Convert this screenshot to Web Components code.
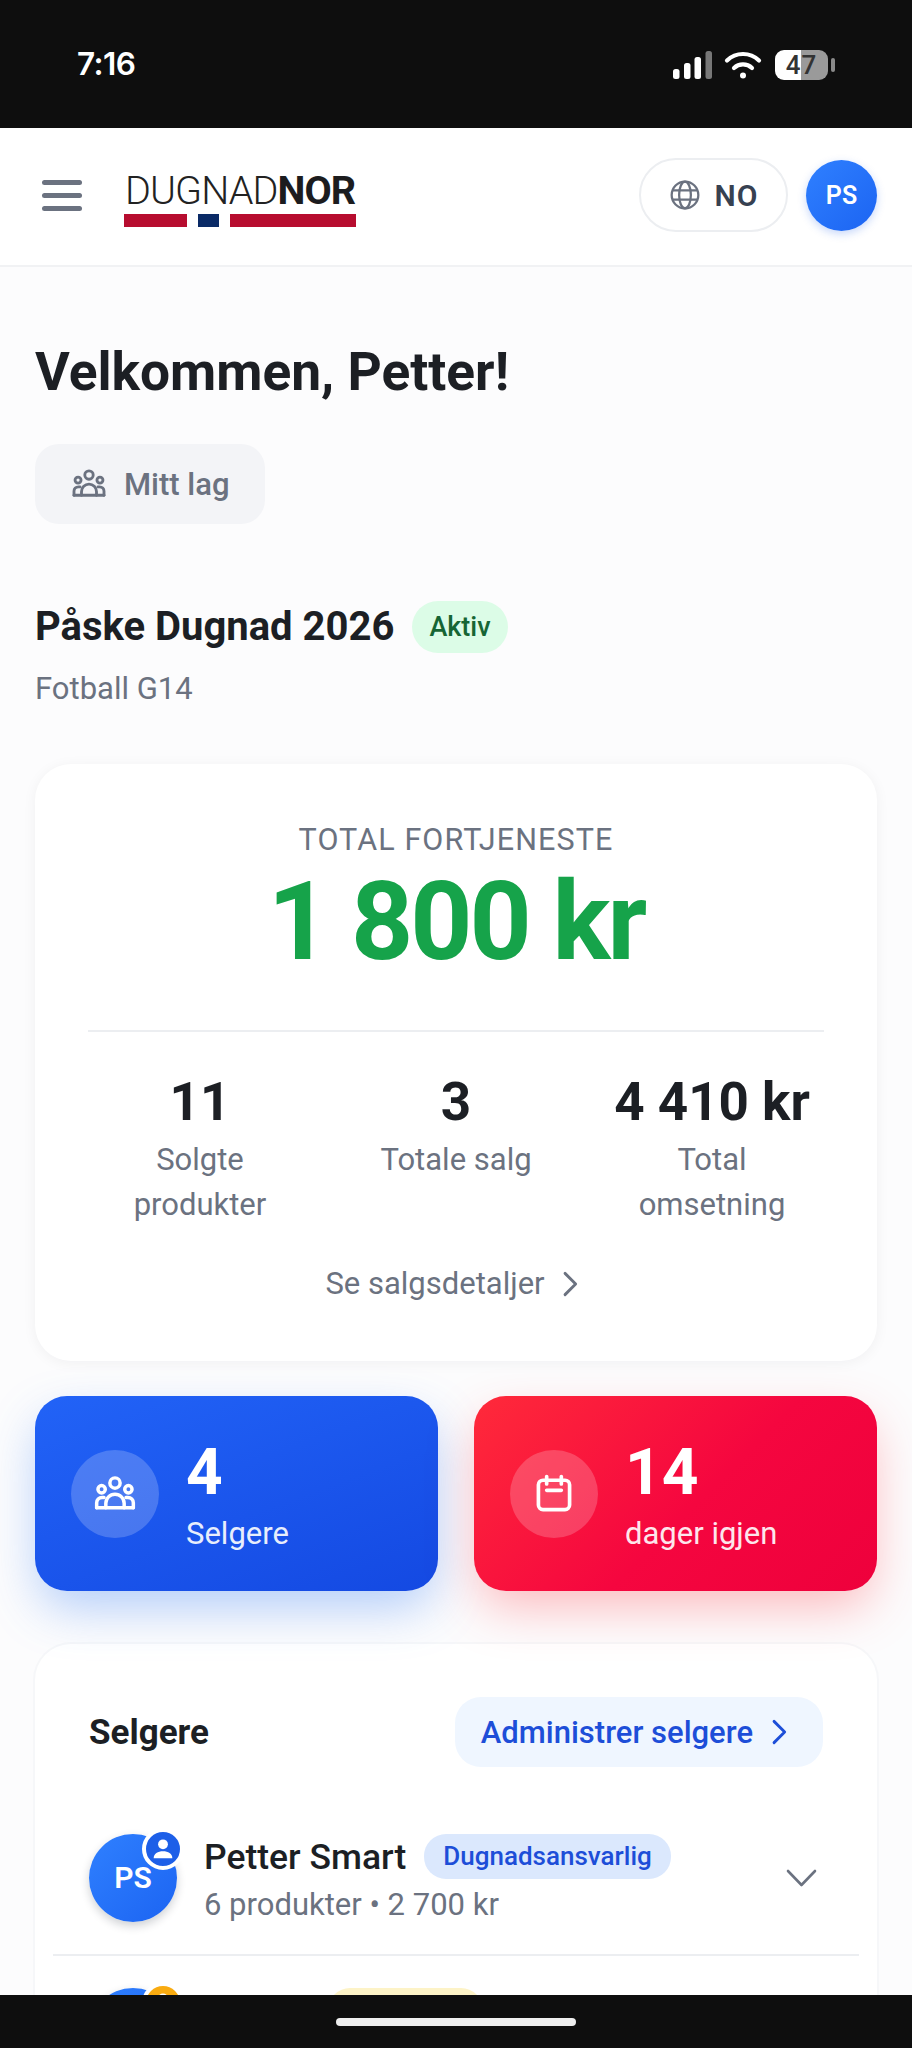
<!DOCTYPE html>
<html lang="no">
<head>
<meta charset="utf-8">
<title>DugnadNor</title>
<style>
  html, body { margin: 0; padding: 0; background: #0e0e0e; }
  body { font-family: Roboto, "Liberation Sans", sans-serif; }
</style>
</head>
<body>
<app-shell>
  <status-bar slot="top"></status-bar>
  <top-header></top-header>
  <main-page>
    <welcome-block></welcome-block>
    <profit-card></profit-card>
    <stat-tiles></stat-tiles>
    <seller-card>
      <seller-row name="Petter Smart" info="6 produkter • 2 700 kr" role-text="Dugnadsansvarlig" initials="PS"></seller-row>
      <seller-row tone="gold" style="--name-w:106px;--role-w:155px"></seller-row>
    </seller-card>
  </main-page>
  <home-bar slot="bottom"></home-bar>
</app-shell>

<script>
(function() {
    const GROUP_ICON = `<svg viewBox="0 0 24 24" fill="none" stroke="currentColor" stroke-width="1.9" stroke-linecap="round" stroke-linejoin="round">
        <circle cx="12" cy="6" r="2.8"/><circle cx="4.7" cy="9.4" r="2"/><circle cx="19.3" cy="9.4" r="2"/>
        <path d="M7 19.5v-2.4a5 5 0 0 1 10 0v2.4"/>
        <path d="M2 19.5v-2.7c0-1.7 1.2-2.9 3-2.9h1"/><path d="M22 19.5v-2.7c0-1.7-1.2-2.9-3-2.9h-1"/>
        <path d="M2 19.5h20"/></svg>`;
    const CHEVRON = `<svg viewBox="0 0 24 24" fill="none" stroke="currentColor" stroke-width="2" stroke-linecap="round" stroke-linejoin="round"><path d="M8.5 4.5l7.5 7.5-7.5 7.5"/></svg>`;

    // small helper so every element stays a plain template + shadow root
    function define(name, html) {
        const template = document.createElement('template');
        template.innerHTML = html;
        customElements.define(name, class extends HTMLElement {
            constructor() {
                super();
                this.attachShadow({ mode: 'open' });
                this.shadowRoot.appendChild(template.content.cloneNode(true));
            }

            connectedCallback() {
                this.shadowRoot.querySelectorAll('[data-text]').forEach((el) => {
                    el.textContent = this.getAttribute(el.dataset.text) || '';
                });
            }
        });
    }

    define('app-shell', `
<style>
    :host { display: flex; flex-direction: column; height: 2048px; overflow: hidden; background: #fcfcfd; }
    #scroll { flex: 1; min-height: 0; overflow: hidden; display: flex; flex-direction: column; }
</style>
<slot name="top"></slot>
<div id="scroll"><slot></slot></div>
<slot name="bottom"></slot>`);

    define('status-bar', `
<style>
    :host { display: flex; flex: none; height: 128px; box-sizing: border-box; padding: 0 77px; align-items: flex-start; justify-content: space-between; background: #0e0e0e; color: #fff; }
    #time { font: 600 31.5px/36px Inter, Roboto, sans-serif; margin-top: 46px; letter-spacing: -.6px; }
    #icons { display: flex; align-items: center; margin-top: 50px; }
    #signal { margin-right: 12px; }
    #wifi { margin-right: 13px; }
    #battery { width: 53px; height: 30px; border-radius: 9px; overflow: hidden; background: linear-gradient(90deg, #fff 0 50%, #9a9a9a 50%); color: #333; font: 500 26px/30px Roboto, sans-serif; letter-spacing: 1px; text-align: center; margin-right: 3px; }
    #nub { width: 4px; height: 14px; border-radius: 2px; background: #8a8a8a; }
</style>
<div id="time">7:16</div>
<div id="icons">
    <svg id="signal" width="39" height="30" viewBox="0 0 39 30"><rect x="0" y="19" width="6.5" height="10" rx="2.5" fill="#fff"/><rect x="11" y="13" width="6.5" height="16" rx="2.5" fill="#fff"/><rect x="21.5" y="7" width="6.5" height="22" rx="2.5" fill="#fff"/><rect x="32.5" y="1" width="6.5" height="28" rx="2.5" fill="#777"/></svg>
    <svg id="wifi" width="38" height="30" viewBox="0 0 38 30" fill="none" stroke="#fff" stroke-width="4.2" stroke-linecap="round"><path d="M3 10.5a23 23 0 0 1 32 0"/><path d="M10 18a13 13 0 0 1 18 0"/><circle cx="19" cy="25.5" r="3" fill="#fff" stroke="none"/></svg>
    <div id="battery">47</div><div id="nub"></div>
</div>`);

    define('top-header', `
<style>
    :host { display: flex; flex: none; height: 139px; box-sizing: border-box; align-items: center; padding: 0 35px 3px 42px; background: #fff; border-bottom: 2px solid #f1f2f4; }
    #burger { width: 40px; height: 31px; display: flex; flex-direction: column; justify-content: space-between; margin-right: 42px; }
    #burger span { height: 5px; border-radius: 3px; background: #6b7280; }
    #logo { width: 232px; padding-top: 8px; }
    #word { font: 300 39.5px/40px Roboto, sans-serif; color: #222; letter-spacing: -.9px; white-space: nowrap; padding-left: 1px; }
    #word b { font-weight: 700; color: #1c1c1e; }
    #flag { display: flex; height: 13px; margin-top: 3px; }
    #flag i { display: block; background: #b70d2f; }
    #right { margin-left: auto; display: flex; align-items: center; gap: 18px; }
    #lang { display: flex; align-items: center; gap: 14px; height: 74px; width: 149px; box-sizing: border-box; justify-content: center; border: 2px solid #eceef1; border-radius: 37px; color: #374151; font: 600 30px Roboto, sans-serif; letter-spacing: 1px; }
    #lang svg { width: 32px; height: 32px; color: #6b7280; }
    #me { width: 71px; height: 71px; border-radius: 50%; background: linear-gradient(135deg, #2f80ff, #1c64f2); color: #fff; font: 600 25px/71px Roboto, sans-serif; text-align: center; box-shadow: 0 3px 8px rgba(37,99,235,.25); }
</style>
<div id="burger"><span></span><span></span><span></span></div>
<div id="logo">
    <div id="word">DUGNAD<b>NOR</b></div>
    <div id="flag"><i style="width:63px"></i><i style="width:21px;margin-left:11px;background:#0a2a66"></i><i style="width:126px;margin-left:11px"></i></div>
</div>
<div id="right">
    <div id="lang"><svg viewBox="0 0 24 24" fill="none" stroke="currentColor" stroke-width="1.7"><circle cx="12" cy="12" r="10"/><ellipse cx="12" cy="12" rx="4.4" ry="10"/><path d="M2.6 8.6h18.8M2.6 15.4h18.8"/></svg>NO</div>
    <div id="me">PS</div>
</div>`);

    define('main-page', `
<style>
    :host { display: block; flex: 1; min-height: 0; box-sizing: border-box; padding: 0 35px; }
</style>
<slot></slot>`);

    define('welcome-block', `
<style>
    :host { display: block; padding-top: 75px; color: #1c1f24; }
    h1 { margin: 0; font: 700 53.3px/61px Roboto, sans-serif; }
    #team { display: flex; align-items: center; gap: 17px; margin-top: 41px; height: 80px; width: 230px; box-sizing: border-box; padding-left: 36px; border-radius: 24px; background: #f3f4f7; color: #6b7280; font: 500 31px Roboto, sans-serif; }
    #team svg { width: 36px; height: 36px; }
    #title { display: flex; align-items: center; gap: 18px; margin-top: 77px; }
    h2 { margin: 0; font: 700 40px/52px Roboto, sans-serif; }
    #badge { height: 52px; padding: 0 17px; border-radius: 26px; background: #dcfce7; color: #166534; font: 500 27px/52px Roboto, sans-serif; }
    #club { margin-top: 17px; font: 400 31px/37px Roboto, sans-serif; color: #6b7280; }
</style>
<h1>Velkommen, Petter!</h1>
<div id="team">${GROUP_ICON}Mitt lag</div>
<div id="title"><h2>Påske Dugnad 2026</h2><span id="badge">Aktiv</span></div>
<div id="club">Fotball G14</div>`);

    define('profit-card', `
<style>
    :host { display: block; margin-top: 57px; box-sizing: border-box; height: 597px; padding: 58px 53px 0; background: #fff; border-radius: 36px; box-shadow: 0 2px 14px rgba(17,24,39,.05); text-align: center; }
    #label { font: 400 30.5px/36px Roboto, sans-serif; letter-spacing: 1.1px; color: #6b7280; }
    #amount { font: 700 108.5px/112px Roboto, sans-serif; letter-spacing: -3px; color: #16a34a; margin-top: 8px; }
    hr { border: 0; height: 2px; background: #eceef1; margin: 52px 0 0; }
    #stats { display: grid; grid-template-columns: repeat(3, 1fr); gap: 32px; margin-top: 41px; }
    .val { font: 700 53px/58px Roboto, sans-serif; color: #1c1f24; white-space: nowrap; }
    .lab { font: 400 31px/45px Roboto, sans-serif; color: #6b7280; margin-top: 6px; }
    #more { display: flex; justify-content: center; align-items: center; gap: 8px; margin-top: 37px; font: 400 31px/40px Roboto, sans-serif; color: #6b7280; }
    #more svg { width: 34px; height: 34px; }
</style>
<div id="label">TOTAL FORTJENESTE</div>
<div id="amount">1 800 kr</div>
<hr>
<div id="stats">
    <div><div class="val">11</div><div class="lab">Solgte<br>produkter</div></div>
    <div><div class="val">3</div><div class="lab">Totale salg</div></div>
    <div><div class="val">4 410 kr</div><div class="lab">Total<br>omsetning</div></div>
</div>
<div id="more">Se salgsdetaljer ${CHEVRON}</div>`);

    define('stat-tiles', `
<style>
    /* the coloured shadows fall over the top of the seller card */
    :host { display: grid; grid-template-columns: 1fr 1fr; gap: 36px; margin-top: 35px; position: relative; z-index: 1; }
    .tile { display: flex; align-items: center; gap: 27px; height: 195px; box-sizing: border-box; padding-left: 36px; border-radius: 32px; color: #fff; }
    #blue { background: linear-gradient(160deg, #2263f7, #1449e2); box-shadow: 0 20px 50px -5px rgba(59,130,246,.4); }
    #red { background: linear-gradient(135deg, #ff2a3a, #f5063f 55%, #ee003c); box-shadow: 0 20px 50px -5px rgba(255,60,70,.35); }
    .disc { width: 88px; height: 88px; border-radius: 50%; background: rgba(255,255,255,.2); display: flex; align-items: center; justify-content: center; }
    .disc svg { width: 44px; height: 44px; }
    .num { font: 700 64px/70px Roboto, sans-serif; margin-top: 4px; }
    .txt { font: 400 31px/40px Roboto, sans-serif; opacity: .9; margin-top: 6px; }
</style>
<div class="tile" id="blue"><div class="disc">${GROUP_ICON}</div><div><div class="num">4</div><div class="txt">Selgere</div></div></div>
<div class="tile" id="red"><div class="disc"><svg viewBox="0 0 24 24" fill="none" stroke="currentColor" stroke-width="2" stroke-linecap="round" stroke-linejoin="round"><rect x="3.5" y="4.5" width="17" height="16" rx="2.5"/><path d="M8 2.5v4M16 2.5v4M8 10h8"/></svg></div><div><div class="num">14</div><div class="txt">dager igjen</div></div></div>`);

    define('seller-card', `
<style>
    :host { display: block; margin-top: 53px; box-sizing: border-box; padding: 53px 18px 0; background: #fff; border-radius: 36px 36px 0 0; box-shadow: 0 0 0 2px #f6f7f9; }
    #head { display: flex; align-items: center; justify-content: space-between; padding: 0 36px; margin-bottom: 35px; }
    h3 { margin: 0; font: 700 35px Roboto, sans-serif; color: #1c1f24; }
    #admin { display: flex; align-items: center; gap: 9px; height: 70px; box-sizing: border-box; padding: 0 27px 0 26px; border-radius: 26px; background: #eff6ff; color: #1d4ed8; font: 500 31px Roboto, sans-serif; }
    #admin svg { width: 34px; height: 34px; }
</style>
<div id="head"><h3>Selgere</h3><div id="admin">Administrer selgere ${CHEVRON}</div></div>
<slot></slot>`);

    define('seller-row', `
<style>
    :host { display: flex; align-items: center; box-sizing: border-box; padding: 32px 36px; border-bottom: 2px solid #eceef1; }
    #av { position: relative; flex: none; width: 88px; height: 88px; border-radius: 50%; background: linear-gradient(135deg, #2f80ff, #1c64f2); color: #fff; font: 600 30px/88px Roboto, sans-serif; text-align: center; box-shadow: 0 4px 10px rgba(17,24,39,.2); margin-right: 27px; }
    #pin { position: absolute; top: -6px; right: -7px; width: 42px; height: 42px; box-sizing: border-box; border-radius: 50%; border: 4px solid #fff; background: #1d5fe8; display: flex; align-items: center; justify-content: center; }
    #pin svg { width: 28px; height: 28px; }
    :host([tone="gold"]) #pin { background: #f9ab10; }
    #top { display: flex; align-items: center; gap: 18px; height: 45px; }
    #name { font: 500 35.5px/44px Roboto, sans-serif; color: #1c1f24; min-width: var(--name-w, 0); }
    #role { height: 45px; min-width: var(--role-w, 0); box-sizing: border-box; padding: 0 19px; border-radius: 22px; background: #dbe8fd; color: #1d4ed8; font: 500 26px/45px Roboto, sans-serif; }
    :host([tone="gold"]) #role { background: #fdf3c7; }
    #info { font: 400 31px/38px Roboto, sans-serif; color: #6b7280; margin: 7px 0 -2px; min-height: 38px; }
    #chev { margin-left: auto; margin-right: 6px; flex: none; color: #6b7280; }
</style>
<div id="av"><span data-text="initials"></span><div id="pin"><svg viewBox="0 0 24 24" fill="#fff"><circle cx="12" cy="8" r="4.2"/><path d="M4 20c0-4 3.6-6 8-6s8 2 8 6z"/></svg></div></div>
<div><div id="top"><span id="name" data-text="name"></span><span id="role" data-text="role-text"></span></div><div id="info" data-text="info"></div></div>
<svg id="chev" width="31" height="18" viewBox="0 0 31 18" fill="none" stroke="currentColor" stroke-width="2.6" stroke-linecap="round" stroke-linejoin="round"><path d="M2 2l13.5 14 13.500-14"/></svg>`);

    define('home-bar', `
<style>
    :host { display: flex; flex: none; height: 53px; box-sizing: border-box; padding-top: 23px; justify-content: center; background: #0e0e0e; position: relative; z-index: 2; }
    div { width: 240px; height: 8px; border-radius: 4px; background: #eee; }
</style>
<div></div>`);
})();
</script>
</body>
</html>
